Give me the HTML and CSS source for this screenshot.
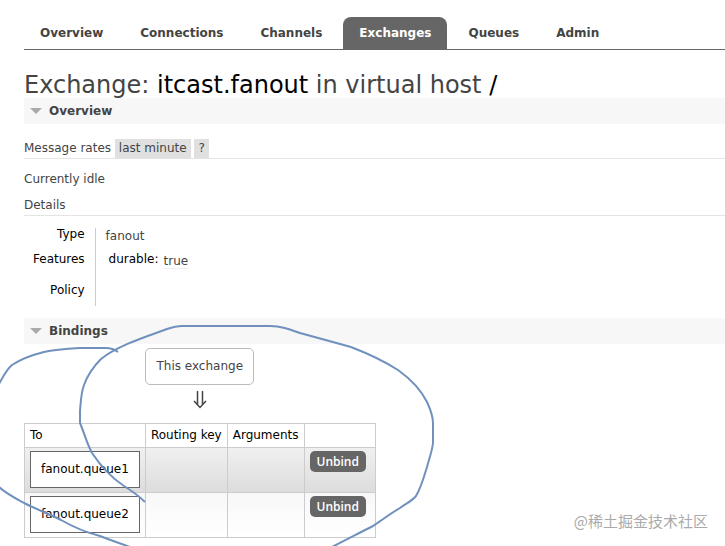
FILE: index.html
```
<!DOCTYPE html>
<html lang="en">
<head>
    <meta charset="UTF-8">
    <meta name="viewport" content="width=device-width, initial-scale=1.0">
    <title>RabbitMQ Management</title>
    <link rel="stylesheet" href="styles.css">
</head>
<body>
    <nav class="menu">
        <ul class="tabs">
            <li><a href="#/">Overview</a></li>
            <li><a href="#/connections">Connections</a></li>
            <li><a href="#/channels">Channels</a></li>
            <li><a href="#/exchanges" class="selected">Exchanges</a></li>
            <li><a href="#/queues">Queues</a></li>
            <li><a href="#/users">Admin</a></li>
        </ul>
    </nav>

    <main class="main">
        <h1>Exchange: <b>itcast.fanout</b> in virtual host <b>/</b></h1>

        <section class="section overview">
            <h2>Overview</h2>
            <div class="body">
                <h3>Message rates <button type="button" class="popup">last minute</button> <button type="button" class="popup">?</button></h3>
                <p class="idle">Currently idle</p>
                <h3 class="details">Details</h3>
                <table class="facts">
                    <tr>
                        <th>Type</th>
                        <td>fanout</td>
                    </tr>
                    <tr class="features">
                        <th>Features</th>
                        <td>
                            <dl class="args">
                                <dt>durable:</dt>
                                <dd><abbr>true</abbr></dd>
                            </dl>
                        </td>
                    </tr>
                    <tr class="policy">
                        <th>Policy</th>
                        <td></td>
                    </tr>
                </table>
            </div>
        </section>

        <section class="section">
            <h2>Bindings</h2>
            <div class="bindings">
                <span class="exchange">This exchange</span>
                <span class="arrow">
                    <svg width="14" height="18" viewBox="0 0 14 18" fill="none" stroke="#444" stroke-width="1.5">
                        <path d="M4.5 0V13.5M9.5 0V13.5M1 10L7 16.5L13 10"/>
                    </svg>
                </span>
                <table class="list">
                    <thead>
                        <tr>
                            <th>To</th>
                            <th>Routing key</th>
                            <th>Arguments</th>
                            <th class="action"></th>
                        </tr>
                    </thead>
                    <tbody>
                        <tr class="alt1">
                            <td><a href="#/queues/fanout.queue1" class="queue">fanout.queue1</a></td>
                            <td></td>
                            <td></td>
                            <td><button type="button" class="unbind">Unbind</button></td>
                        </tr>
                        <tr class="alt2">
                            <td><a href="#/queues/fanout.queue2" class="queue">fanout.queue2</a></td>
                            <td></td>
                            <td></td>
                            <td><button type="button" class="unbind">Unbind</button></td>
                        </tr>
                    </tbody>
                </table>
            </div>
        </section>
    </main>

    <!-- pen strokes drawn over the page -->
    <svg class="ink" width="460" height="546" viewBox="0 0 460 546">
        <path d="M118 352C114 349 111 348 106 348H80C64 349 53 350 44 352C32 355 21 359 12 365C6 370 3 377 -1 384"/>
        <path d="M-1 487C7 494 15 498 24 503C36 509 49 514 61 520C75 528 88 533 100 536C110 540 119 543 130 547"/>
        <path d="M145 502C138 495 132 491 124 486C109 476 100 465 92 453C87 444 85 435 80 423V411C81 399 81 393 84 385C88 374 93 367 101 359C117 346 145 337 167 329Q176 326 182 326H270C281 326 289 329 300 333L351 347C369 354 384 361 398 370C412 380 421 390 427 402Q433 415 433 423V443C432 452 429 459 427 467C424 477 421 488 416 496C411 502 405 504 400 508C390 514 382 520 373 526C361 532 346 540 332 547"/>
    </svg>
    <div class="watermark">@稀土掘金技术社区</div>
</body>
</html>
```
FILE: styles.css
```
body {
    position: relative;
    margin: 0;
    padding: 17px 0 0 24px;
    min-height: 100vh;
    box-sizing: border-box;
    overflow: hidden;
    background: #fff;
    color: #444;
    font: 12px/17px Verdana, "DejaVu Sans", sans-serif;
}

a {
    color: #444;
    text-decoration: none;
}

.menu {
    border-bottom: 1px solid #666;
}

.tabs {
    display: flex;
    gap: 5px;
    margin: 0;
    padding: 0;
    list-style: none;
}

.tabs a {
    display: block;
    padding: 8px 16px 7px;
    border-radius: 8px 8px 0 0;
    font-weight: bold;
}

.tabs .selected {
    background: #666;
    color: #fff;
}

h1 {
    margin: 22px 0 0;
    font-size: 24px;
    line-height: 26px;
    font-weight: normal;
}

h1 b {
    color: #000;
    font-weight: normal;
}

h2 {
    display: flex;
    align-items: center;
    gap: 7px;
    margin: 0;
    padding: 4px 6px;
    background: #f7f7f7;
    font-size: 12px;
    line-height: 18px;
}

/* open-section marker */
h2::before {
    content: "";
    border: 6px solid transparent;
    border-top-color: #aaa;
    border-bottom: 0;
}

.overview {
    margin-bottom: 12px;
}

.body {
    padding-top: 15px;
}

h3 {
    margin: 0;
    border-bottom: 1px solid #e4e4e4;
    font-size: 12px;
    line-height: 19px;
    font-weight: normal;
}

.popup {
    padding: 0 4px;
    border: 0;
    background: #e0e0e0;
    color: #444;
    font: inherit;
    cursor: pointer;
}

.idle {
    margin: 12px 0 8px;
}

.facts {
    margin-top: 12px;
    border-collapse: collapse;
}

.facts th {
    padding: 0 10px 12px 9px;
    border-right: 1px solid #ccc;
    color: #000;
    font-weight: normal;
    line-height: 13px;
    text-align: right;
    vertical-align: top;
}

.facts td {
    padding: 0 10px;
    vertical-align: top;
}

.facts .features th {
    padding-bottom: 18px;
}

.facts .policy th {
    padding-bottom: 9px;
}

.args {
    display: flex;
    gap: 5px;
    margin: 0 3px;
}

.args dt {
    color: #000;
    line-height: 13px;
}

.args dd {
    margin: 0;
}

.args abbr {
    border-bottom: 1px solid #eee;
}

.bindings {
    display: inline-grid;
    justify-items: center;
    padding-top: 4px;
}

.exchange {
    padding: 9px 10px;
    border: 1px solid #bbb;
    border-radius: 5px;
}

.arrow {
    display: flex;
    padding: 6px 0 14px;
}

.list {
    border-collapse: collapse;
}

.list th {
    padding: 3px 5px;
    border: 1px solid #ccc;
    color: #000;
    font-weight: normal;
    text-align: left;
}

.list td {
    padding: 3px 5px 4px;
    border: 1px solid #ccc;
    vertical-align: top;
}

.list .action {
    width: 60px;
}

.alt1 {
    background: linear-gradient(#f0f0f0, #dcdcdc);
}

.alt2 {
    background: linear-gradient(#f8f8f8, #fff);
}

.queue {
    display: block;
    padding: 9px 10px;
    border: 1px solid #666;
    background: #fff;
    color: #000;
}

.unbind {
    display: block;
    padding: 2px 7px;
    border: 0;
    border-radius: 5px;
    background: #666;
    color: #fff;
    font: 600 12px/17px "Open Sans", sans-serif;
    cursor: pointer;
}

.ink {
    position: absolute;
    top: 0;
    left: 0;
    fill: none;
    stroke: #7090bd;
    stroke-width: 2;
    pointer-events: none;
}

.watermark {
    position: absolute;
    right: 17px;
    bottom: 14px;
    color: #aaa;
    font: 15px/22px "Noto Sans CJK SC", sans-serif;
}
```
